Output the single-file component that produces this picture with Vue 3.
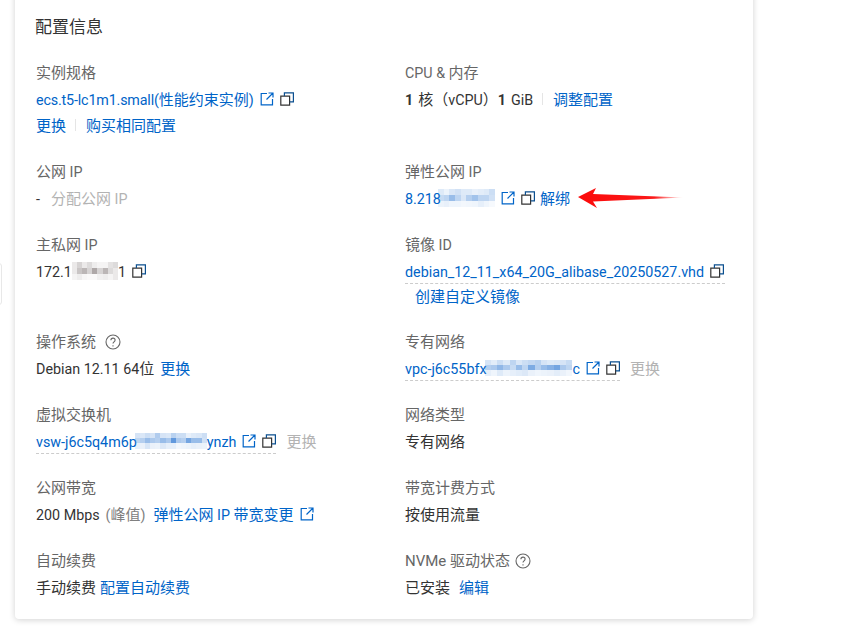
<script setup>
const palette = { blue: '70,135,215', gray: '120,110,110' }
const cells = (pattern, kind) => {
  const n = pattern.length
  const rows = [0, 1, 2].flatMap((r) =>
    pattern.map((o, i) => {
      const v = r === 1 ? o : r === 0 ? pattern[(i + 3) % n] * 0.5 : pattern[(i + 5) % n] * 0.25
      return { background: `rgba(${palette[kind]},${v})` }
    })
  )
  return { rows, grid: { gridTemplateColumns: `repeat(${n}, 1fr)` } }
}
const m1 = cells([.3,.35,.55,.35,.2,.4,.5,.35,.35,.25], 'blue')
const m2 = cells([.15,.4,.5,.3,.6,.3,.5,.25,.15], 'gray')
const m3 = cells([.4,.45,.6,.45,.3,.55,.35,.7,.4,.55,.65,.75,.45,.35], 'blue')
const m4 = cells([.35,.4,.55,.45,.4,.55,.45,.85,.45,.4,.75,.55,.55,.25], 'blue')
</script>

<template>
  <div class="page">
    <div class="edge"></div>
    <section class="card">
      <h2 class="title">配置信息</h2>
      <div class="grid">
        <div class="item tall">
          <div class="label">实例规格</div>
          <div class="value">
            <a class="link"><span class="l tight">ecs.t5-lc1m1.small(</span>性能约束实例<span class="l">)</span></a>
            <svg class="ico ext" viewBox="0 0 14 14"><path d="M7 1.500H1.200v11.300h11.300V7M8.500 1H13v4.500M13 1 6.500 7.500"/></svg>
            <svg class="ico copy" viewBox="0 0 14 14"><path class="front" d="M.8 4.200h8.800v9H.8z"/><path class="back" d="M4.400 4V.8h9v9h-3.600"/></svg>
          </div>
          <div class="value">
            <a class="link">更换</a><i class="sep"></i><a class="link">购买相同配置</a>
          </div>
        </div>
        <div class="item">
          <div class="label"><span class="l">CPU &amp;&nbsp;</span><span>内存</span></div>
          <div class="value"><b class="l">1</b><span class="g3">核（<span class="l">vCPU</span>）</span><b class="l">1</b><span class="l g2">GiB</span><i class="sep s2"></i><a class="link">调整配置</a></div>
        </div>

        <div class="item">
          <div class="label"><span>公网</span><span class="l">&nbsp;IP</span></div>
          <div class="value"><span class="l">-</span><span class="muted alloc">分配公网<span class="l">&nbsp;IP</span></span></div>
        </div>
        <div class="item">
          <div class="label"><span>弹性公网</span><span class="l">&nbsp;IP</span></div>
          <div class="value">
            <a class="link l">8.218</a>
            <span class="mosaic mo1" :style="m1.grid"><i v-for="(c, i) in m1.rows" :key="i" :style="c"></i></span>
            <svg class="ico ext" viewBox="0 0 14 14"><path d="M7 1.500H1.200v11.300h11.300V7M8.500 1H13v4.500M13 1 6.500 7.500"/></svg>
            <svg class="ico copy" viewBox="0 0 14 14"><path class="front" d="M.8 4.200h8.800v9H.8z"/><path class="back" d="M4.400 4V.8h9v9h-3.600"/></svg>
            <a class="link unbind">解绑</a>
          </div>
        </div>

        <div class="item">
          <div class="label"><span>主私网</span><span class="l">&nbsp;IP</span></div>
          <div class="value">
            <span class="l">172.1</span>
            <span class="mosaic mo2" :style="m2.grid"><i v-for="(c, i) in m2.rows" :key="i" :style="c"></i></span>
            <span class="l">1</span>
            <svg class="ico copy" viewBox="0 0 14 14"><path class="front" d="M.8 4.200h8.800v9H.8z"/><path class="back" d="M4.400 4V.8h9v9h-3.600"/></svg>
          </div>
        </div>
        <div class="item">
          <div class="label"><span>镜像</span><span class="l">&nbsp;ID</span></div>
          <div class="value dashed w320">
            <a class="link l">debian_12_11_x64_20G_alibase_20250527.vhd</a>
            <svg class="ico copy" viewBox="0 0 14 14"><path class="front" d="M.8 4.200h8.800v9H.8z"/><path class="back" d="M4.400 4V.8h9v9h-3.600"/></svg>
          </div>
          <div class="value short"><a class="link create">创建自定义镜像</a></div>
        </div>

        <div class="item">
          <div class="label"><span>操作系统</span><svg class="help h1" viewBox="0 0 16 16"><circle cx="8" cy="8" r="7"/><path d="M5.900 6.200c0-1.300 1-2.100 2.100-2.100s2.100.8 2.100 2c0 1.800-2.100 1.800-2.100 3.500"/><path d="M8 11.300v1.200"/></svg></div>
          <div class="value"><span class="l">Debian 12.11 64</span><span>位</span><a class="link os">更换</a></div>
        </div>
        <div class="item">
          <div class="label">专有网络</div>
          <div class="row">
            <div class="value dashed">
              <a class="link l">vpc-j6c55bfx</a>
              <span class="mosaic mo3" :style="m3.grid"><i v-for="(c, i) in m3.rows" :key="i" :style="c"></i></span>
              <a class="link l">c</a>
              <svg class="ico ext" viewBox="0 0 14 14"><path d="M7 1.500H1.200v11.300h11.300V7M8.500 1H13v4.500M13 1 6.500 7.500"/></svg>
              <svg class="ico copy" viewBox="0 0 14 14"><path class="front" d="M.8 4.200h8.800v9H.8z"/><path class="back" d="M4.400 4V.8h9v9h-3.600"/></svg>
            </div>
            <span class="muted chg">更换</span>
          </div>
        </div>

        <div class="item">
          <div class="label">虚拟交换机</div>
          <div class="row">
            <div class="value dashed">
              <a class="link l">vsw-j6c5q4m6p</a>
              <span class="mosaic mo4" :style="m4.grid"><i v-for="(c, i) in m4.rows" :key="i" :style="c"></i></span>
              <a class="link l">ynzh</a>
              <svg class="ico ext" viewBox="0 0 14 14"><path d="M7 1.500H1.200v11.300h11.300V7M8.500 1H13v4.500M13 1 6.500 7.500"/></svg>
              <svg class="ico copy" viewBox="0 0 14 14"><path class="front" d="M.8 4.200h8.800v9H.8z"/><path class="back" d="M4.400 4V.8h9v9h-3.600"/></svg>
            </div>
            <span class="muted chg">更换</span>
          </div>
        </div>
        <div class="item">
          <div class="label">网络类型</div>
          <div class="value">专有网络</div>
        </div>

        <div class="item">
          <div class="label">公网带宽</div>
          <div class="value">
            <span class="l">200 Mbps</span><span class="peak"><span class="l">(</span>峰值<span class="l">)</span></span>
            <a class="link bw">弹性公网<span class="l">&nbsp;IP&nbsp;</span>带宽变更</a>
            <svg class="ico ext" viewBox="0 0 14 14"><path d="M7 1.500H1.200v11.300h11.300V7M8.500 1H13v4.500M13 1 6.500 7.500"/></svg>
          </div>
        </div>
        <div class="item">
          <div class="label">带宽计费方式</div>
          <div class="value">按使用流量</div>
        </div>

        <div class="item">
          <div class="label">自动续费</div>
          <div class="value"><span>手动续费</span><a class="link renew">配置自动续费</a></div>
        </div>
        <div class="item">
          <div class="label"><span class="nv">NVMe&nbsp;</span><span>驱动状态</span><svg class="help h2" viewBox="0 0 16 16"><circle cx="8" cy="8" r="7"/><path d="M5.900 6.200c0-1.300 1-2.100 2.100-2.100s2.100.8 2.100 2c0 1.800-2.100 1.800-2.100 3.500"/><path d="M8 11.300v1.200"/></svg></div>
          <div class="value"><span>已安装</span><a class="link edit">编辑</a></div>
        </div>
      </div>
    </section>
    <svg class="arrow" width="108" height="22" viewBox="0 0 108 22">
      <defs>
        <linearGradient id="fade" x1="0" x2="1" y1="0" y2="0">
          <stop offset="0" stop-color="#fb0a0a"/>
          <stop offset=".72" stop-color="#fb1a1a"/>
          <stop offset="1" stop-color="#ff3030" stop-opacity="0"/>
        </linearGradient>
      </defs>
      <path fill="url(#fade)" d="M1 10 19 1l-3 6 91 3.500-91 4 4 6.500z"/>
    </svg>
  </div>
</template>

<style>
html, body { margin: 0; background: #fff; }
</style>

<style scoped>
.page {
  position: relative;
  width: 849px;
  height: 626px;
  overflow: hidden;
  background: #fff;
  font-family: Roboto, "Noto Sans CJK SC", sans-serif;
  font-size: 15px;
  color: #333;
}
.l { font-size: 14.300px; }
.tight { letter-spacing: -.16px; }
.nv { font-size: 15px; }
.edge {
  position: absolute;
  left: -6px;
  top: 263px;
  width: 6px;
  height: 40px;
  border: 1px solid #e8e8e8;
  border-radius: 3px;
}
.card {
  box-sizing: border-box;
  width: 738px;
  height: 629px;
  margin: -10px 0 0 15px;
  padding: 25px 21px 0 21px;
  background: #fff;
  border-radius: 4px;
  box-shadow: 0 1px 6px rgba(0, 0, 0, .18);
}
.title {
  margin: 0 0 21px -1px;
  font-size: 17px;
  font-weight: 400;
  line-height: 24px;
  color: #333;
}
.grid {
  display: grid;
  grid-template-columns: 369px 1fr;
  row-gap: 21px;
  align-items: start;
}
.label,
.value {
  display: flex;
  align-items: baseline;
  height: 26px;
  white-space: nowrap;
}
.label { color: #666; line-height: 27px; }
.value { color: #333; line-height: 28px; }
.short { height: 24px; line-height: 27px; }
.row { display: flex; align-items: flex-start; height: 26px; }
.link { color: #0064c8; }
.muted { color: #b3b3b3; }
.sep {
  align-self: center;
  width: 1px;
  height: 12px;
  margin: 0 10px 0 9px;
  background: #e5e5e5;
}
.s2 { margin: 0 10px 0 9px; }
.g3 { margin-left: 5px; }
.g2 { margin-left: 5px; }
b { font-weight: 700; }
.alloc { margin-left: 11px; }
.ico {
  flex: none;
  align-self: center;
  width: 14px;
  height: 14px;
  fill: none;
  stroke-width: 1.200;
}
.ext { margin-left: 6px; stroke: #0064c8; }
.copy { margin-left: 6px; }
.front { stroke: #333; }
.back { stroke: #0b4f8f; }
.unbind { margin-left: 5px; }
.dashed {
  box-sizing: border-box;
  border-bottom: 1px dashed #ccc;
}
.w320 { width: 320px; }
.create { margin-left: 10px; }
.os { margin-left: 6px; }
.chg { margin-left: 10px; line-height: 28px; }
.peak { margin-left: 6px; color: #808080; }
.bw { margin-left: 8px; }
.renew { margin-left: 4px; }
.edit { margin-left: 9px; }
.help {
  flex: none;
  align-self: center;
  width: 16px;
  height: 16px;
  fill: none;
  stroke: #666;
  stroke-width: 1.100;
}
.h1 { margin-left: 9px; }
.h2 { margin-left: 5px; }
.mosaic {
  display: inline-grid;
  align-self: center;
  height: 18px;
  filter: blur(.600px);
}
.mo1 { width: 57px; margin-left: -3px; }
.mo2 { width: 46px; }
.mo3 { width: 88px; margin-left: -2px; height: 16px; }
.mo4 { width: 72px; margin-left: -2px; height: 16px; }
.arrow {
  position: absolute;
  left: 577px;
  top: 187px;
}
</style>
